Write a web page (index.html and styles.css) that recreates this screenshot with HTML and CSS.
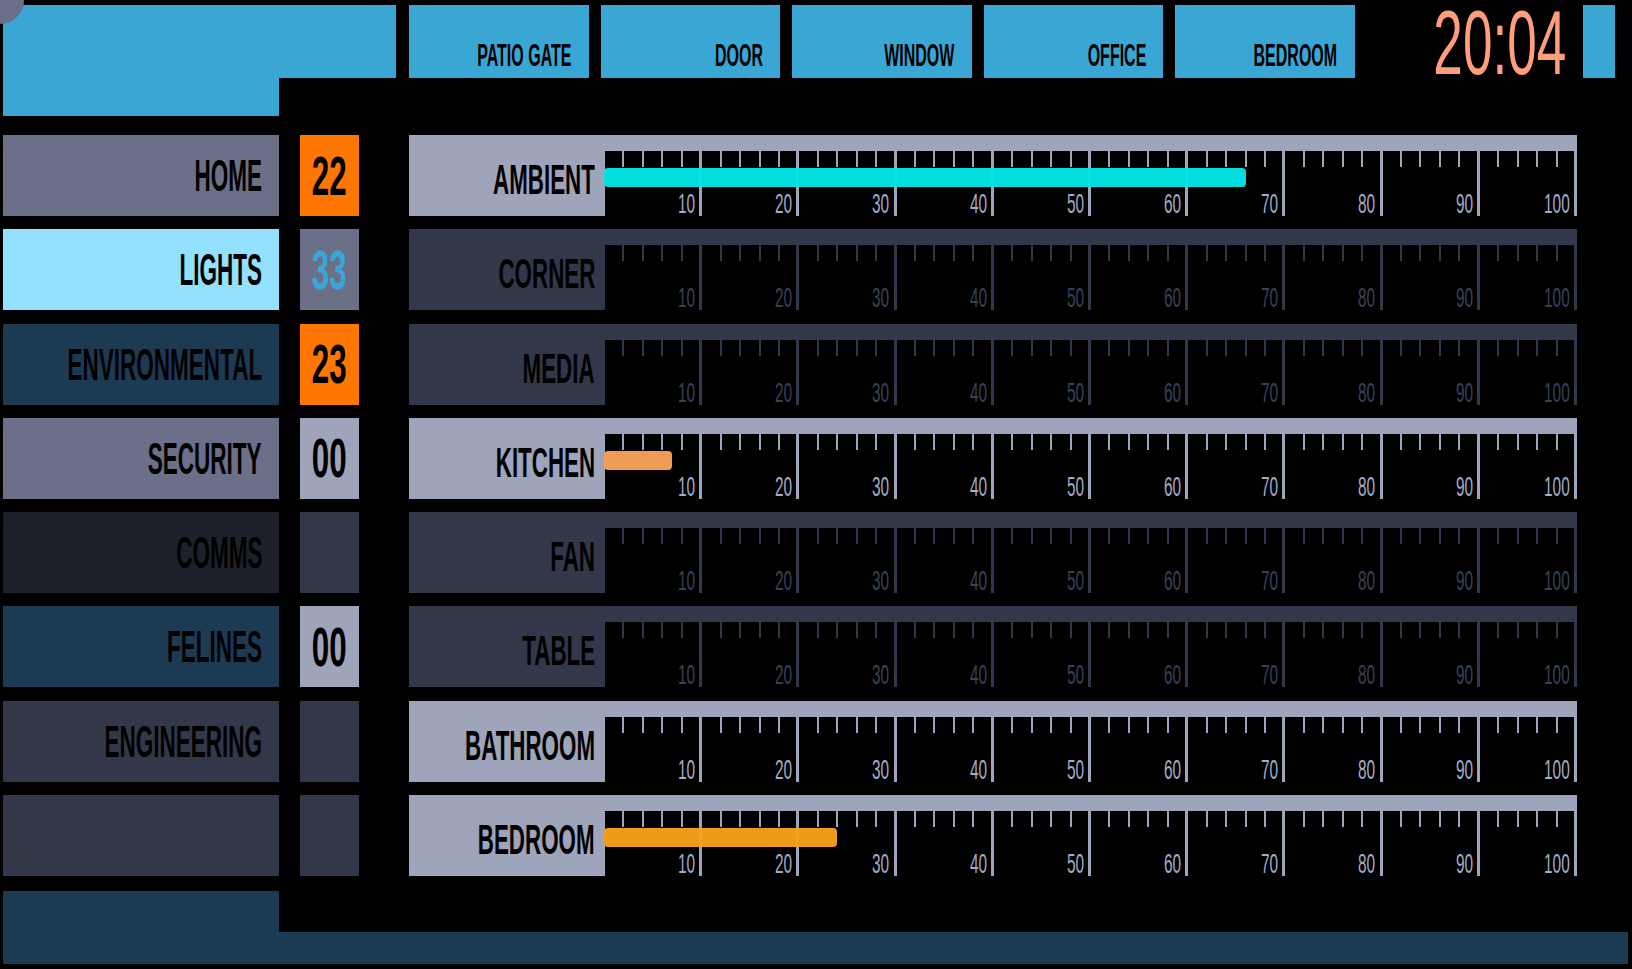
FILE: index.html
```html
<!DOCTYPE html>
<html lang="en">
<head>
<meta charset="utf-8">
<title>LCARS Lights</title>
<link rel="stylesheet" href="styles.css">
</head>
<body>
<div class="frame">
  <div class="corner"></div>
  <header class="top">
    <div class="elbow"><div class="elbow-bar"></div><div class="elbow-leg"></div></div>
    <nav class="btns">
      <div class="btn"><span class="t">PATIO GATE</span></div>
      <div class="btn"><span class="t">DOOR</span></div>
      <div class="btn"><span class="t">WINDOW</span></div>
      <div class="btn"><span class="t">OFFICE</span></div>
      <div class="btn"><span class="t">BEDROOM</span></div>
    </nav>
    <div class="clock"><span class="t">20:04</span></div>
    <div class="cap"></div>
  </header>

  <main class="rows">
    <div class="row">
      <div class="nav nav-grey"><span class="t">HOME</span></div>
      <div class="num num-orange"><span class="t">22</span></div>
      <div class="chan on">
        <div class="chan-label"><span class="t">AMBIENT</span></div>
        <div class="scale">
          <div class="bar bar-cyan" style="width:66%"></div>
          <div class="marks"><div class="m"><span>10</span></div><div class="m"><span>20</span></div><div class="m"><span>30</span></div><div class="m"><span>40</span></div><div class="m"><span>50</span></div><div class="m"><span>60</span></div><div class="m"><span>70</span></div><div class="m"><span>80</span></div><div class="m"><span>90</span></div><div class="m"><span>100</span></div></div>
        </div>
      </div>
    </div>

    <div class="row">
      <div class="nav nav-light"><span class="t">LIGHTS</span></div>
      <div class="num num-grey"><span class="t">33</span></div>
      <div class="chan off">
        <div class="chan-label"><span class="t">CORNER</span></div>
        <div class="scale">
          <div class="marks"><div class="m"><span>10</span></div><div class="m"><span>20</span></div><div class="m"><span>30</span></div><div class="m"><span>40</span></div><div class="m"><span>50</span></div><div class="m"><span>60</span></div><div class="m"><span>70</span></div><div class="m"><span>80</span></div><div class="m"><span>90</span></div><div class="m"><span>100</span></div></div>
        </div>
      </div>
    </div>

    <div class="row">
      <div class="nav nav-navy"><span class="t">ENVIRONMENTAL</span></div>
      <div class="num num-orange"><span class="t">23</span></div>
      <div class="chan off">
        <div class="chan-label"><span class="t">MEDIA</span></div>
        <div class="scale">
          <div class="marks"><div class="m"><span>10</span></div><div class="m"><span>20</span></div><div class="m"><span>30</span></div><div class="m"><span>40</span></div><div class="m"><span>50</span></div><div class="m"><span>60</span></div><div class="m"><span>70</span></div><div class="m"><span>80</span></div><div class="m"><span>90</span></div><div class="m"><span>100</span></div></div>
        </div>
      </div>
    </div>

    <div class="row">
      <div class="nav nav-grey"><span class="t">SECURITY</span></div>
      <div class="num num-pale"><span class="t">00</span></div>
      <div class="chan on">
        <div class="chan-label"><span class="t">KITCHEN</span></div>
        <div class="scale">
          <div class="bar bar-peach" style="width:7%"></div>
          <div class="marks"><div class="m"><span>10</span></div><div class="m"><span>20</span></div><div class="m"><span>30</span></div><div class="m"><span>40</span></div><div class="m"><span>50</span></div><div class="m"><span>60</span></div><div class="m"><span>70</span></div><div class="m"><span>80</span></div><div class="m"><span>90</span></div><div class="m"><span>100</span></div></div>
        </div>
      </div>
    </div>

    <div class="row">
      <div class="nav nav-dark"><span class="t">COMMS</span></div>
      <div class="num num-slate"></div>
      <div class="chan off">
        <div class="chan-label"><span class="t">FAN</span></div>
        <div class="scale">
          <div class="marks"><div class="m"><span>10</span></div><div class="m"><span>20</span></div><div class="m"><span>30</span></div><div class="m"><span>40</span></div><div class="m"><span>50</span></div><div class="m"><span>60</span></div><div class="m"><span>70</span></div><div class="m"><span>80</span></div><div class="m"><span>90</span></div><div class="m"><span>100</span></div></div>
        </div>
      </div>
    </div>

    <div class="row">
      <div class="nav nav-navy"><span class="t">FELINES</span></div>
      <div class="num num-pale"><span class="t">00</span></div>
      <div class="chan off">
        <div class="chan-label"><span class="t">TABLE</span></div>
        <div class="scale">
          <div class="marks"><div class="m"><span>10</span></div><div class="m"><span>20</span></div><div class="m"><span>30</span></div><div class="m"><span>40</span></div><div class="m"><span>50</span></div><div class="m"><span>60</span></div><div class="m"><span>70</span></div><div class="m"><span>80</span></div><div class="m"><span>90</span></div><div class="m"><span>100</span></div></div>
        </div>
      </div>
    </div>

    <div class="row">
      <div class="nav nav-slate"><span class="t">ENGINEERING</span></div>
      <div class="num num-slate"></div>
      <div class="chan on">
        <div class="chan-label"><span class="t">BATHROOM</span></div>
        <div class="scale">
          <div class="marks"><div class="m"><span>10</span></div><div class="m"><span>20</span></div><div class="m"><span>30</span></div><div class="m"><span>40</span></div><div class="m"><span>50</span></div><div class="m"><span>60</span></div><div class="m"><span>70</span></div><div class="m"><span>80</span></div><div class="m"><span>90</span></div><div class="m"><span>100</span></div></div>
        </div>
      </div>
    </div>

    <div class="row">
      <div class="nav nav-slate"></div>
      <div class="num num-slate"></div>
      <div class="chan on">
        <div class="chan-label"><span class="t">BEDROOM</span></div>
        <div class="scale">
          <div class="bar bar-orange" style="width:24%"></div>
          <div class="marks"><div class="m"><span>10</span></div><div class="m"><span>20</span></div><div class="m"><span>30</span></div><div class="m"><span>40</span></div><div class="m"><span>50</span></div><div class="m"><span>60</span></div><div class="m"><span>70</span></div><div class="m"><span>80</span></div><div class="m"><span>90</span></div><div class="m"><span>100</span></div></div>
        </div>
      </div>
    </div>
  </main>

  <footer class="bottom">
    <div class="bottom-leg"></div>
    <div class="bottom-bar"></div>
  </footer>
</div>
</body>
</html>
```

FILE: styles.css
```css
html, body {
  margin: 0;
  padding: 0;
  background: #000;
}

body {
  font-family: "Liberation Sans", Arial, sans-serif;
  color: #000;
  overflow: hidden;
}

.frame {
  position: relative;
  width: 1625px;
  height: 959px;
  padding: 5px 4px 5px 3px;
  display: flex;
  flex-direction: column;
}

.corner {
  position: absolute;
  left: 0;
  top: 0;
  width: 24px;
  height: 24px;
  border-bottom-right-radius: 24px;
  background: #6b6f88;
  z-index: 2;
}

.t {
  display: inline-block;
  white-space: nowrap;
  line-height: 1;
  font-weight: 700;
  transform: scaleX(0.5);
  transform-origin: right center;
}

/* ---------- header ---------- */
.top {
  display: flex;
  align-items: flex-start;
  height: 111px;
  flex: none;
}

.elbow {
  width: 393px;
  flex: none;
}

.elbow-bar {
  height: 73px;
  background: #3aa6d4;
}

.elbow-leg {
  width: 276px;
  height: 38px;
  background: #3aa6d4;
}

.btns {
  display: flex;
  gap: 12px;
  margin-left: 13px;
  flex: none;
}

.btn {
  width: 179.5px;
  height: 73px;
  box-sizing: border-box;
  padding: 0 17px 7px 0;
  background: #3aa6d4;
  display: flex;
  justify-content: flex-end;
  align-items: flex-end;
}

.btn .t {
  font-size: 32px;
}

.clock {
  flex: 1;
  min-width: 0;
  display: flex;
  justify-content: flex-end;
  color: #ff9e7b;
}

.clock .t {
  font-size: 90px;
  font-weight: 400;
  line-height: 0.86;
  margin-left: -92px;
  transform: scaleX(0.59);
}

.cap {
  width: 32px;
  height: 73px;
  margin: 0 13px 0 17px;
  background: #3aa6d4;
  flex: none;
}

/* ---------- rows ---------- */
.rows {
  margin-top: 19px;
  display: flex;
  flex-direction: column;
  gap: 13.3px;
  flex: none;
}

.row {
  display: flex;
  height: 81px;
}

.nav {
  width: 276px;
  box-sizing: border-box;
  padding-right: 17px;
  display: flex;
  justify-content: flex-end;
  align-items: center;
  flex: none;
}

.nav .t {
  font-size: 45px;
}

.nav-grey  { background: #6b6f88; }
.nav-light { background: #93e1ff; }
.nav-navy  { background: #1d3a53; }
.nav-dark  { background: #1e2129; }
.nav-slate { background: #323849; }

.num {
  width: 59px;
  margin-left: 21px;
  display: flex;
  justify-content: center;
  align-items: center;
  flex: none;
}

.num .t {
  font-size: 56px;
  transform: scaleX(0.56);
  transform-origin: center center;
}

.num-orange { background: #ff7700; }
.num-grey   { background: #6b6f88; color: #3aa6d4; }
.num-pale   { background: #9ea4ba; }
.num-slate  { background: #323849; }

.chan {
  --c: #9ea4ba;
  --label: #a3abc6;
  display: flex;
  margin-left: 50px;
  width: 1168px;
  flex: none;
}

.chan.off {
  --c: #323849;
  --label: #394058;
}

.chan-label {
  width: 196px;
  box-sizing: border-box;
  padding: 0 10px 15px 0;
  background: var(--c);
  display: flex;
  justify-content: flex-end;
  align-items: flex-end;
  flex: none;
}

.chan-label .t {
  font-size: 43px;
  transform: scaleX(0.52);
}

.scale {
  width: 972px;
  box-sizing: border-box;
  border-top: 16px solid var(--c);
  background-color: #000;
  background-image:
    repeating-linear-gradient(90deg, transparent 0, transparent calc(10% - 3px), var(--c) calc(10% - 3px), var(--c) 10%),
    repeating-linear-gradient(90deg, transparent 0, transparent calc(2% - 2px), var(--c) calc(2% - 2px), var(--c) 2%);
  background-size: 100% 100%, 100% 16px;
  background-repeat: no-repeat;
  background-position: 0 0, 0 0;
  display: flex;
  flex-direction: column;
  flex: none;
}

.bar {
  height: 19px;
  margin-top: 17px;
  margin-left: -1px;
  border-radius: 4px;
  opacity: 0.96;
}

.bar-cyan   { background: #02e6e6; }
.bar-peach  { background: #f8a25a; }
.bar-orange { background: #f8a11c; }

.marks {
  margin-top: auto;
  margin-bottom: 2px;
  height: 20px;
  display: flex;
}

.m {
  flex: 0 0 10%;
  box-sizing: border-box;
  padding-right: 7px;
  display: flex;
  justify-content: flex-end;
}

.m span {
  display: inline-block;
  font-size: 28px;
  line-height: 20px;
  color: var(--label);
  white-space: nowrap;
  transform: scaleX(0.55);
  transform-origin: right center;
}

/* ---------- footer ---------- */
.bottom {
  margin-top: 15px;
  flex: none;
}

.bottom-leg {
  width: 276px;
  height: 41px;
  background: #1d3a53;
}

.bottom-bar {
  height: 32px;
  background: #1d3a53;
}
```
